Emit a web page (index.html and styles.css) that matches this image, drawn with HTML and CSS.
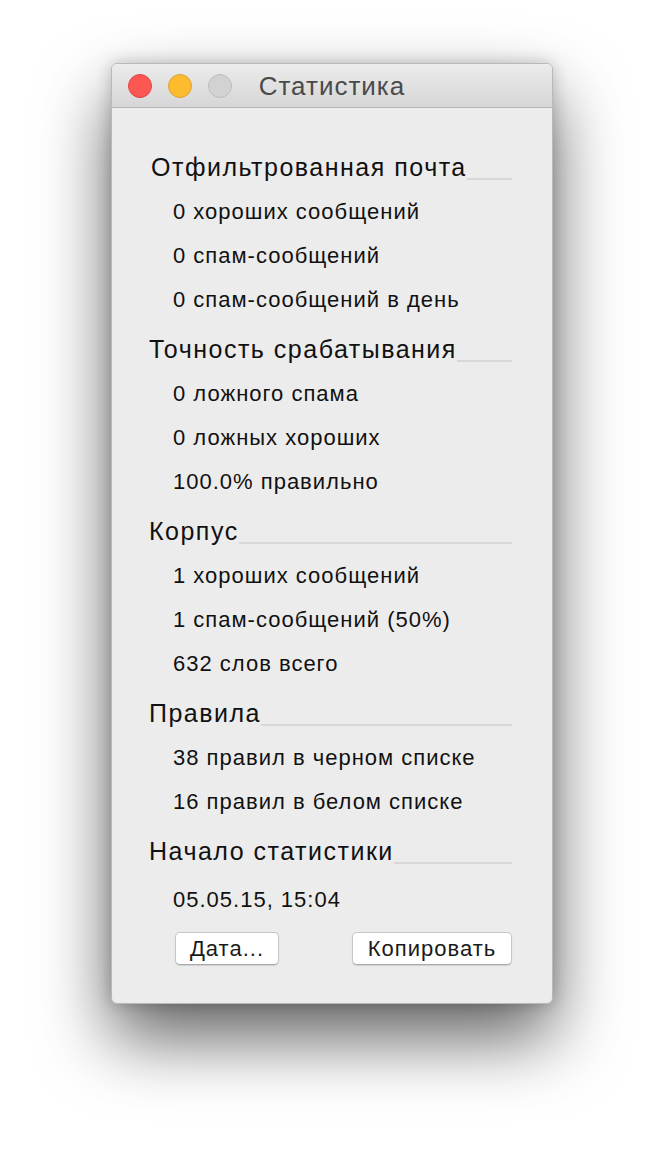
FILE: index.html
```html
<!DOCTYPE html>
<html>
<head>
    <title>Статистика</title>
    <link rel="stylesheet" href="styles.css">
</head>
<body>
    <div class="window">
        <div class="titlebar">
            <div class="lights">
                <span class="light light-close"></span>
                <span class="light light-min"></span>
                <span class="light light-max"></span>
            </div>
            <div class="title">Статистика</div>
        </div>

        <div class="content">
            <div class="section-header first"><span>Отфильтрованная почта</span><i class="rule"></i></div>
            <div class="item">0 хороших сообщений</div>
            <div class="item">0 спам-сообщений</div>
            <div class="item">0 спам-сообщений в день</div>

            <div class="section-header"><span>Точность срабатывания</span><i class="rule"></i></div>
            <div class="item">0 ложного спама</div>
            <div class="item">0 ложных хороших</div>
            <div class="item">100.0% правильно</div>

            <div class="section-header"><span>Корпус</span><i class="rule"></i></div>
            <div class="item">1 хороших сообщений</div>
            <div class="item">1 спам-сообщений (50%)</div>
            <div class="item">632 слов всего</div>

            <div class="section-header"><span>Правила</span><i class="rule"></i></div>
            <div class="item">38 правил в черном списке</div>
            <div class="item">16 правил в белом списке</div>

            <div class="section-header"><span>Начало статистики</span><i class="rule"></i></div>
            <div class="item item-date">05.05.15, 15:04</div>

            <div class="buttons">
                <button class="btn btn-date">Дата...</button>
                <button class="btn btn-copy">Копировать</button>
            </div>
        </div>
    </div>
</body>
</html>
```

FILE: styles.css
```css
* {
    margin: 0;
    padding: 0;
    box-sizing: border-box;
}

body {
    font-family: 'Liberation Sans', Arial, sans-serif;
    background-color: #ffffff;
    color: #000000;
    min-height: 100vh;
    padding: 63px 0 0 111px;
}

.window {
    width: 442px;
    height: 941px;
    background-color: #ececec;
    border-radius: 6px;
    border: 1px solid #b9b9b9;
    overflow: hidden;
    box-shadow: 0 34px 70px rgba(0, 0, 0, 0.62), 0 0 16px rgba(0, 0, 0, 0.2);
}

.titlebar {
    height: 44px;
    background: linear-gradient(#ececec, #d6d6d6);
    border-bottom: 1px solid #b4b4b4;
    position: relative;
    display: flex;
    align-items: center;
    justify-content: center;
}

.lights {
    position: absolute;
    left: 16px;
    top: 10px;
    display: flex;
    gap: 16px;
}

.light {
    width: 24px;
    height: 24px;
    border-radius: 50%;
    display: block;
}

.light-close {
    background-color: #fc5753;
    border: 1px solid #df4744;
}

.light-min {
    background-color: #fdbc2e;
    border: 1px solid #dea236;
}

.light-max {
    background-color: #d2d2d2;
    border: 1px solid #bdbdbd;
}

.title {
    font-size: 26px;
    letter-spacing: 1px;
    color: #4a4a4a;
    margin-top: 2px;
}

.content {
    padding: 32px 40px 0 37px;
}

.section-header {
    height: 50px;
    padding-top: 4px;
    line-height: 46px;
    font-size: 25px;
    letter-spacing: 1.5px;
    color: #111111;
    display: flex;
    align-items: baseline;
}

.section-header.first {
    padding-left: 2px;
}

.section-header span {
    white-space: nowrap;
}

.rule {
    flex: 1;
    height: 2px;
    background-color: #d8d8d8;
    position: relative;
    top: 4px;
}

.item {
    height: 44px;
    line-height: 44px;
    font-size: 22px;
    letter-spacing: 1px;
    color: #111111;
    padding-left: 24px;
}

.item-date {
    height: 48px;
    padding-top: 4px;
}

.buttons {
    display: flex;
    justify-content: space-between;
    margin-top: 10px;
    padding-left: 26px;
}

.btn {
    height: 33px;
    font-family: 'Liberation Sans', Arial, sans-serif;
    font-size: 22px;
    letter-spacing: 1px;
    color: #1a1a1a;
    background-color: #ffffff;
    border: 1px solid #c6c6c6;
    border-bottom-color: #a9a9a9;
    border-radius: 5px;
    box-shadow: 0 1px 1px rgba(0, 0, 0, 0.12);
}

.btn-date {
    width: 104px;
}

.btn-copy {
    width: 160px;
}
```
